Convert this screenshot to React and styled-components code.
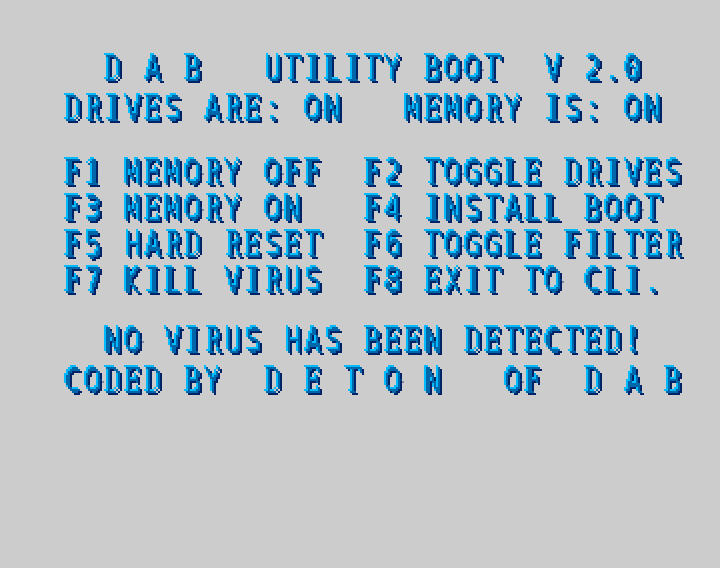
import React from "react";
import styled, { createGlobalStyle } from "styled-components";

const PageStyle = createGlobalStyle`
  html, body { margin: 0; background: #cccccc; }
`;

const Screen = styled.main`
  box-sizing: border-box;
  width: 720px;
  height: 568px;
  padding: 53px 16px 0 64px;
  overflow: hidden;
  background: #cccccc;
`;

const Section = styled.section`
  display: flex;
  flex-direction: column;
  gap: ${(p) => p.$gap}px;
  margin-bottom: ${(p) => p.$after}px;
`;

const Line = styled.div`
  display: flex;
  height: 30px;
  width: 640px;
  white-space: pre;
  color: #0066aa;
  font: 35.7px/30px "DejaVu Serif", serif;
  filter: url(#bevel);
`;

const Cell = styled.span`
  flex: none;
  display: flex;
  justify-content: center;
  width: 18px;
  margin-right: 2px;
`;

const families = {
  slab: '"DejaVu Serif", serif',
  plain: '"DejaVu Sans", sans-serif',
  mono: '"DejaVu Sans Mono", monospace',
};

const Glyph = styled.span`
  display: block;
  flex: none;
  transform: translate(${(p) => p.$shift}px, 0.6px) scale(${(p) => p.$stretch}, ${(p) => p.$tall});
  font-family: ${(p) => families[p.$face]};
`;

const FilterDefs = styled.svg`
  display: block;
  width: 0;
  height: 0;
`;

// Per character: face, horizontal scale, horizontal nudge in px, vertical scale.
const glyphs = {
  A: ["plain", 0.66, 0], B: ["slab", 0.63, 0], C: ["plain", 0.66, -0.5, 0.95],
  D: ["slab", 0.58, 0], E: ["slab", 0.64, 0], F: ["slab", 0.68, -0.4],
  G: ["plain", 0.64, 0, 0.95], H: ["plain", 0.66, 0], I: ["slab", 1, 0],
  K: ["plain", 0.66, -1], L: ["slab", 0.68, 0], M: ["plain", 0.57, -1],
  N: ["plain", 0.66, -0.5], O: ["plain", 0.62, 0, 0.95], R: ["slab", 0.58, 0],
  S: ["plain", 0.72, 0, 0.96], T: ["slab", 0.68, -0.4], U: ["plain", 0.66, 0.5],
  V: ["plain", 0.64, 0], X: ["plain", 0.62, -0.5], Y: ["plain", 0.68, 0],
  0: ["mono", 0.8, 0, 0.96], 1: ["slab", 0.8, 0], 2: ["plain", 0.76, 0],
  3: ["plain", 0.78, 0, 0.96], 4: ["plain", 0.72, 0], 5: ["plain", 0.76, 0],
  6: ["plain", 0.76, 0, 0.96], 7: ["plain", 0.76, 0], 8: ["plain", 0.8, 0, 0.96],
  ":": ["plain", 1, 0.5],
};

const sections = [
  { gap: 10, after: 34, lines: [
    "  D A B   UTILITY BOOT  V 2.0",
    "DRIVES ARE: ON   MEMORY IS: ON",
  ] },
  { gap: 6, after: 30, lines: [
    "F1 MEMORY OFF  F2 TOGGLE DRIVES",
    "F3 MEMORY ON   F4 INSTALL BOOT",
    "F5 HARD RESET  F6 TOGGLE FILTER",
    "F7 KILL VIRUS  F8 EXIT TO CLI.",
  ] },
  { gap: 10, after: 0, lines: [
    "  NO VIRUS HAS BEEN DETECTED!",
    "CODED BY  D E T O N   OF  D A B",
  ] },
];

function PixelLine({ text }) {
  return (
    <Line>
      {[...text].map((ch, i) => {
        const [face, stretch, shift, tall = 1] = glyphs[ch] ?? ["slab", 1, 0];
        return (
          <Cell key={i}>
            <Glyph $face={face} $stretch={stretch} $shift={shift} $tall={tall}>{ch}</Glyph>
          </Cell>
        );
      })}
    </Line>
  );
}

// Snaps lettering to 2px blocks, then adds the light and dark edges.
function BevelFilter() {
  return (
    <FilterDefs aria-hidden="true">
      <filter id="bevel" filterUnits="userSpaceOnUse" primitiveUnits="userSpaceOnUse"
        x="-4" y="-6" width="648" height="44" colorInterpolationFilters="sRGB">
        <feFlood x="0" y="0" width="1" height="1" floodColor="#000" result="dot" />
        <feComposite in="dot" in2="dot" operator="over" x="0" y="0" width="2" height="2" result="unit" />
        <feTile in="unit" result="grid" />
        <feGaussianBlur in="SourceAlpha" stdDeviation="0.55" result="soft" />
        <feOffset in="soft" dx="-0.5" dy="-0.5" result="centred" />
        <feComposite in="centred" in2="grid" operator="in" result="samples" />
        <feComponentTransfer in="samples" result="hard">
          <feFuncA type="linear" slope="100" intercept="-40" />
        </feComponentTransfer>
        <feOffset in="hard" dx="1" dy="0" result="h1" />
        <feMerge result="row"><feMergeNode in="hard" /><feMergeNode in="h1" /></feMerge>
        <feOffset in="row" dx="0" dy="1" result="r1" />
        <feMerge result="shape"><feMergeNode in="row" /><feMergeNode in="r1" /></feMerge>
        <feFlood floodColor="#00bbff" result="lightColor" />
        <feOffset in="shape" dx="-2" dy="-2" result="lightShape" />
        <feComposite in="lightColor" in2="lightShape" operator="in" result="light" />
        <feFlood floodColor="#002266" result="darkColor" />
        <feOffset in="shape" dx="2" dy="2" result="darkShape" />
        <feComposite in="darkColor" in2="darkShape" operator="in" result="dark" />
        <feFlood floodColor="#0066aa" result="faceColor" />
        <feComposite in="faceColor" in2="shape" operator="in" result="face" />
        <feMerge>
          <feMergeNode in="dark" /><feMergeNode in="light" /><feMergeNode in="face" />
        </feMerge>
      </filter>
    </FilterDefs>
  );
}

export default function App() {
  return (
    <>
      <PageStyle />
      <Screen>
        {sections.map((s, i) => (
          <Section key={i} $gap={s.gap} $after={s.after}>
            {s.lines.map((text) => <PixelLine key={text} text={text} />)}
          </Section>
        ))}
        <BevelFilter />
      </Screen>
    </>
  );
}
